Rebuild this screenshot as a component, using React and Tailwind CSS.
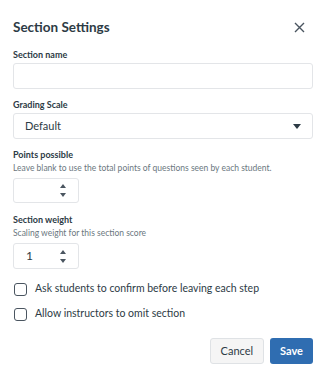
import React, { useState } from 'react';

const font = { fontFamily: 'Lato, "Open Sans", sans-serif' };

// tiny spinner arrows used by number inputs
const Spinner = () => (
    <div className="flex flex-col items-center gap-[5px]">
        <svg width="6" height="4" viewBox="0 0 6 4"><path d="M3 0L6 4H0z" fill="#4a5560" /></svg>
        <svg width="6" height="4" viewBox="0 0 6 4"><path d="M0 0H6L3 4z" fill="#4a5560" /></svg>
    </div>
);

const NumberBox = ({ value, h }) => (
    <div className={`flex items-center justify-between w-[66px] ${h} border border-[#e3e5e8] rounded-[3px] pl-[12px] pr-[12px] text-[12px] text-[#2d3b45]`}>
        <span>{value}</span>
        <Spinner />
    </div>
);

const Check = ({ label }) => {
    const [on, setOn] = useState(false);
    return (
        <label className="flex items-center gap-[8px] h-[16px] cursor-pointer" onClick={() => setOn(!on)}>
            <span className={`w-[13px] h-[13px] rounded-[3px] border-[1.5px] border-[#4a5560] ${on ? 'bg-[#2f6db1]' : 'bg-white'}`} />
            <span className="text-[10.5px] text-[#2d3b45]">{label}</span>
        </label>
    );
};

export default function App() {
    return (
        <div className="w-[326px] h-[377px] bg-white px-[13px] pt-[16px]" style={font}>
            {/* header */}
            <div className="flex items-center justify-between h-[22px]">
                <h1 className="text-[13.5px] font-bold text-[#2d3b45]">Section Settings</h1>
                <svg width="11" height="11" viewBox="0 0 11 11" className="mr-[8px]">
                    <path d="M1 1L10 10M10 1L1 10" stroke="#4a5560" strokeWidth="1.4" />
                </svg>
            </div>

            <div className="mt-[11px] text-[9px] font-bold text-[#2d3b45] leading-[12px]">Section name</div>
            <div className="mt-[2px] h-[26px] border border-[#e3e5e8] rounded-[3px]" />

            <div className="mt-[10px] text-[9px] font-bold text-[#2d3b45] leading-[12px]">Grading Scale</div>
            <div className="mt-[2px] h-[26px] border border-[#e3e5e8] rounded-[3px] flex items-center justify-between pl-[11px] pr-[11px]">
                <span className="text-[11px] text-[#2d3b45]">Default</span>
                <svg width="8" height="5" viewBox="0 0 8 5"><path d="M0 0H8L4 5z" fill="#2d3b45" /></svg>
            </div>

            <div className="mt-[10px] text-[9px] font-bold text-[#2d3b45] leading-[12px]">Points possible</div>
            <div className="mt-[1px] text-[8.5px] text-[#6b7780] leading-[12px]">Leave blank to use the total points of questions seen by each student.</div>
            <div className="mt-[4px]"><NumberBox value="" h="h-[25px]" /></div>

            <div className="mt-[11px] text-[9px] font-bold text-[#2d3b45] leading-[12px]">Section weight</div>
            <div className="mt-[1px] text-[8.5px] text-[#6b7780] leading-[12px]">Scaling weight for this section score</div>
            <div className="mt-[4px]"><NumberBox value="1" h="h-[26px]" /></div>

            <div className="mt-[12px] flex flex-col gap-[9px] pl-[1px]">
                <Check label="Ask students to confirm before leaving each step" />
                <Check label="Allow instructors to omit section" />
            </div>

            <div className="mt-[16px] flex justify-end gap-[6px]">
                <button className="h-[26px] px-[10px] rounded-[3px] border border-[#dfe2e5] bg-[#f5f5f5] text-[11px] text-[#2d3b45]">Cancel</button>
                <button className="h-[26px] px-[10px] rounded-[3px] bg-[#2f6db1] text-[11px] font-bold text-white">Save</button>
            </div>
        </div>
    );
}
